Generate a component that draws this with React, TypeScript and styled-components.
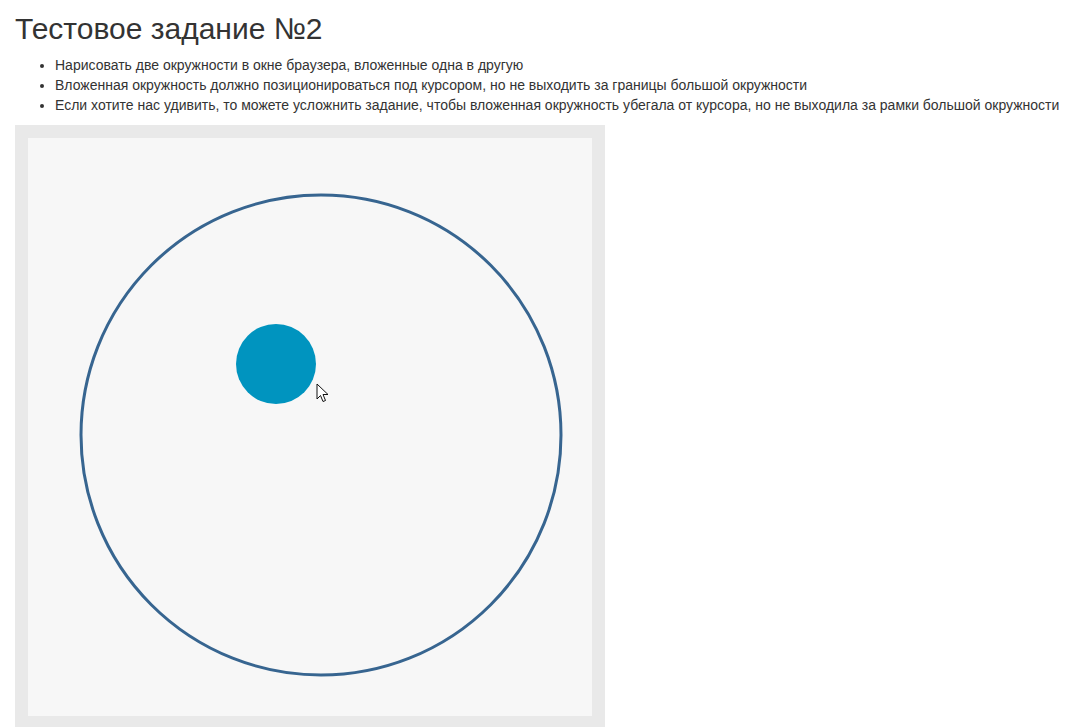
import React from "react";
import styled, { createGlobalStyle } from "styled-components";

const Global = createGlobalStyle`
  html, body { margin: 0; padding: 0; background: #fff; }
  body {
    font-family: "Liberation Sans", Arial, Helvetica, sans-serif;
    font-size: 14px;
    line-height: 1.42857;
    color: #333;
  }
`;

const Page = styled.div`
  padding: 0 0 0 15px;
`;

const Title = styled.h2`
  font-size: 30px;
  font-weight: 500;
  line-height: 1.1;
  margin: 12px 0 10px;
`;

const List = styled.ul`
  margin: 0 0 10px;
  padding-left: 40px;
  li { line-height: 20px; white-space: nowrap; }
`;

const Frame = styled.div`
  width: 564px;
  padding: 13px;
  background: #e9e9e9;
`;

const Canvas = styled.div`
  position: relative;
  height: 578px;
  background: #f7f7f7;
  overflow: hidden;
`;

const Drawing = styled.svg`
  display: block;
  width: 564px;
  height: 578px;
`;

const Cursor = styled.svg`
  position: absolute;
  left: 288px;
  top: 245px;
  width: 14px;
  height: 22px;
  pointer-events: none;
`;

export default function App() {
  return (
    <>
      <Global />
      <Page>
        <Title>Тестовое задание №2</Title>
        <List>
          <li>Нарисовать две окружности в окне браузера, вложенные одна в другую</li>
          <li>Вложенная окружность должно позиционироваться под курсором, но не выходить за границы большой окружности</li>
          <li>Если хотите нас удивить, то можете усложнить задание, чтобы вложенная окружность убегала от курсора, но не выходила за рамки большой окружности</li>
        </List>
        <Frame>
          <Canvas>
            <Drawing viewBox="0 0 564 578">
              <circle cx="293" cy="297" r="240" fill="none" stroke="#376590" strokeWidth="3" />
              <circle cx="248" cy="226" r="40" fill="#0094bf" />
            </Drawing>
            <Cursor viewBox="0 0 14 22">
              <path d="M1 1 L1 16 L4.5 12.5 L7 18.5 L9.5 17.5 L7 11.5 L12 11.5 Z" fill="#fff" stroke="#111" strokeWidth="1" strokeLinejoin="round" />
            </Cursor>
          </Canvas>
        </Frame>
      </Page>
    </>
  );
}
